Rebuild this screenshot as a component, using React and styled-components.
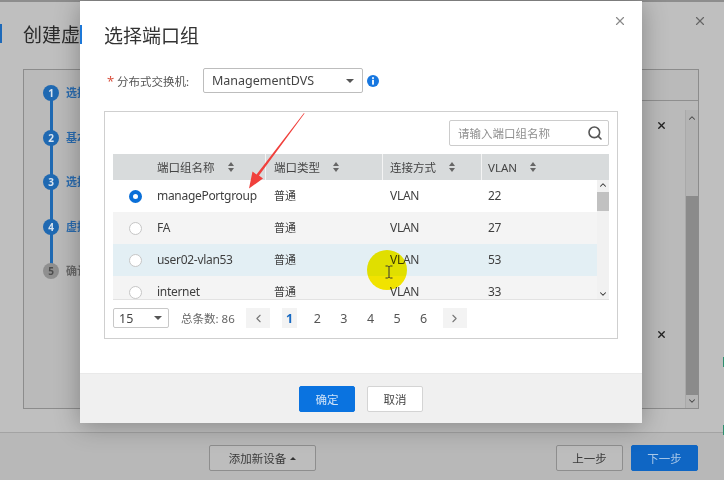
import React from 'react'
import styled, { createGlobalStyle } from 'styled-components'
import { Search, X, ChevronLeft, ChevronRight, ChevronUp, ChevronDown } from 'lucide-react'

const FONT = `"Noto Sans", "Noto Sans CJK SC", sans-serif`

const GlobalStyle = createGlobalStyle`
    html, body { margin: 0; padding: 0; background: #bcbcbc; }
    * { box-sizing: border-box; }
    body { font-family: ${FONT}; color: #333; }
`

const Page = styled.div`
    position: relative;
    width: 724px;
    height: 480px;
    overflow: hidden;
    display: flex;
    flex-direction: column;
    background: #bfbfbf;
    filter: blur(0.3px);
`
const TopStrip = styled.div`
    height: 2px;
    flex: none;
    background: #8d8d8d;
`
const PageHead = styled.div`
    height: 67px;
    flex: none;
    display: flex;
    align-items: center;
`
const HeadMark = styled.div`
    width: 2px;
    height: 19px;
    margin: 0 21px 0 0;
    background: #1d69b9;
    position: relative;
    top: -2px;
`
const PageTitle = styled.div`
    font-size: 19px;
    color: #2b2b2b;
    position: relative;
    top: -2px;
`
const PageClose = styled.div`
    position: absolute;
    top: 14px;
    right: 17px;
    color: #666;
    display: flex;
`
const Panel = styled.div`
    margin: 0 25px 0 23px;
    height: 340px;
    flex: none;
    border: 1px solid #8c8c8c;
    display: flex;
    background: #bababa;
`
const Stepper = styled.div`
    width: 100px;
    padding: 15px 0 0 19px;
    display: flex;
    flex-direction: column;
`
const Step = styled.div`
    height: 44.5px;
    position: relative;
    display: flex;
    gap: 7px;
    font-size: 11px;
    font-weight: 700;
    white-space: nowrap;
    line-height: 16px;
    color: ${p => (p.$done ? '#2a6cb0' : '#6a6a6a')};
    &::before {
        content: '';
        position: absolute;
        left: 6.5px;
        top: 14px;
        width: 3px;
        height: 34px;
        background: ${p => (p.$done ? '#1f69b2' : 'transparent')};
    }
`
const StepDot = styled.div`
    position: relative;
    width: 16px;
    height: 16px;
    border-radius: 50%;
    flex: none;
    background: ${p => (p.$done ? '#1f69b2' : '#8f8f8f')};
    color: ${p => (p.$done ? '#d7e3ef' : '#4d4d4d')};
    font-size: 10px;
    line-height: 16px;
    text-align: center;
`
const PanelBody = styled.div`
    flex: 1;
    display: flex;
    justify-content: flex-end;
`
const ListArea = styled.div`
    width: 56px;
    margin-top: 30px;
    border-top: 1px solid #8f8f8f;
    display: flex;
    justify-content: flex-end;
    position: relative;
`
const ListMark = styled.div`
    position: absolute;
    left: 14px;
    top: ${p => p.$top}px;
    color: #222;
    display: flex;
`
const PanelScroll = styled.div`
    width: 13px;
    margin-top: 9px;
    border-left: 1px solid #a9a9a9;
    background: #b4b4b4;
    display: flex;
    flex-direction: column;
    align-items: center;
    color: #444;
    padding-top: 3px;
`
const PanelThumb = styled.div`
    width: 100%;
    margin-top: 73px;
    height: 199px;
    background: #8b8b8b;
    margin-bottom: 1px;
`
const PageFoot = styled.div`
    flex: 1;
    margin-top: 23px;
    border-top: 1px solid #a3a3a3;
    display: flex;
    align-items: flex-start;
    padding: 12px 26px 0 209px;
    background: #b8b8b8;
`
const GhostButton = styled.div`
    height: 26px;
    width: ${p => p.$w}px;
    margin-left: ${p => p.$ml || 0}px;
    border: 1px solid #8e8e8e;
    border-radius: 2px;
    background: #bdbdbd;
    font-size: 11.5px;
    color: #3a3a3a;
    display: flex;
    align-items: center;
    justify-content: center;
    gap: 4px;
`
const DarkPrimary = styled(GhostButton)`
    border-color: #0f66c4;
    background: #0f66c4;
    color: #a9c8e8;
`
const UpCaret = styled.span`
    width: 0;
    height: 0;
    border-left: 3px solid transparent;
    border-right: 3px solid transparent;
    border-bottom: 3px solid #333;
`
const EdgeTick = styled.div`
    position: absolute;
    right: 0;
    top: ${p => p.$top}px;
    width: 1px;
    height: 10px;
    background: #2f8f6f;
`

/* dialog */
const Dialog = styled.div`
    position: absolute;
    left: 80px;
    top: 1px;
    width: 562px;
    height: 422px;
    background: #fff;
    box-shadow: 0 3px 24px rgba(0, 0, 0, 0.3);
    display: flex;
    flex-direction: column;
`
const DialogSliver = styled.div`
    position: absolute;
    left: 0;
    top: 24px;
    width: 2px;
    height: 19px;
    background: #1d78d8;
`
const DialogClose = styled.div`
    position: absolute;
    top: 13px;
    right: 15px;
    color: #8a8a8a;
    display: flex;
`
const DialogTitle = styled.div`
    font-size: 19px;
    line-height: 28px;
    margin: 21px 0 0 24px;
    color: #333;
`
const FormRow = styled.div`
    display: flex;
    align-items: center;
    height: 25px;
    margin: 18px 0 0 27px;
`
const Required = styled.span`
    color: #d9523f;
    font-size: 13px;
    width: 10px;
`
const FormLabel = styled.span`
    font-size: 11.5px;
    color: #555;
    width: 86px;
`
const SelectBox = styled.div`
    width: ${p => p.$w}px;
    height: ${p => p.$h}px;
    border: 1px solid ${p => (p.$light ? '#c8c8c8' : '#bdbdbd')};
    border-radius: 2px;
    display: flex;
    align-items: center;
    justify-content: space-between;
    padding: 0 ${p => p.$pr}px 0 ${p => p.$pl}px;
    font-size: ${p => p.$fs}px;
    color: #444;
    background: #fff;
`
const Caret = styled.span`
    width: 0;
    height: 0;
    border-left: 4px solid transparent;
    border-right: 4px solid transparent;
    border-top: 4px solid #555;
`
const InfoDot = styled.span`
    width: 12px;
    height: 12px;
    margin-left: 4px;
    display: flex;
`
const TableCard = styled.div`
    margin: 18px 0 0 24px;
    width: 514px;
    height: 228px;
    border: 1px solid #cfcfcf;
    padding: 8px 8px 0 8px;
`
const SearchRow = styled.div`
    display: flex;
    justify-content: flex-end;
    margin-bottom: 8px;
`
const SearchBox = styled.div`
    width: 160px;
    height: 26px;
    border: 1px solid #cccccc;
    border-radius: 2px;
    display: flex;
    align-items: center;
    justify-content: space-between;
    padding: 0 5px 0 8px;
    font-size: 11.5px;
    color: #8f8f8f;
`
const COLS = '44px 108px 117px 99px 1fr'
const HeadRow = styled.div`
    display: grid;
    grid-template-columns: ${COLS};
    height: 26px;
    background: #d8dbdc;
`
const HeadCell = styled.div`
    display: flex;
    align-items: center;
    gap: 13px;
    font-size: 11.5px;
    color: #444;
    padding-left: ${p => p.$pl || 0}px;
    border-left: ${p => (p.$sep ? '1px solid #f4f4f4' : 'none')};
`
const SortIcon = styled.span`
    display: flex;
    flex-direction: column;
    gap: 2px;
    &::before, &::after {
        content: '';
        width: 0;
        height: 0;
        border-left: 3px solid transparent;
        border-right: 3px solid transparent;
    }
    &::before { border-bottom: 4px solid #666; }
    &::after { border-top: 4px solid #666; }
`
const BodyWrap = styled.div`
    display: flex;
    height: 120px;
    border-bottom: 1px solid #e2e2e2;
`
const Rows = styled.div`
    flex: 1;
    overflow: hidden;
`
const Row = styled.div`
    display: grid;
    grid-template-columns: ${COLS};
    align-items: center;
    height: 32px;
    font-size: 12px;
    letter-spacing: -0.3px;
    color: #3f3f3f;
    background: ${p => p.$bg};
`
const Cell = styled.div`
    padding: 0 0 2px ${p => p.$pl || 0}px;
    white-space: nowrap;
`
const TypeCell = styled(Cell)`
    font-size: 11px;
    letter-spacing: 0;
`
const RadioCell = styled.div`
    display: flex;
`
const Radio = styled.span`
    display: block;
    margin-left: 16px;
    width: 13px;
    height: 13px;
    border-radius: 50%;
    background: #fff;
    border: ${p => (p.$on ? '4px solid #0a6fd8' : '1px solid #c6c6c6')};
`
const TableScroll = styled.div`
    width: 12px;
    background: #f1f1f1;
    display: flex;
    flex-direction: column;
    align-items: center;
    color: #333;
`
const ScrollThumb = styled.div`
    width: 100%;
    height: 19px;
    margin-top: 2px;
    background: #c1c1c1;
`
const Spacer = styled.div`
    flex: 1;
`
const Pager = styled.div`
    display: flex;
    align-items: center;
    margin-top: 8px;
    font-size: 12px;
    color: #555;
`
const PagerTotal = styled.span`
    width: 53px;
    margin: 0 12px;
    font-size: 11.5px;
    color: #666;
    white-space: nowrap;
`
const PagerArrow = styled.div`
    width: 24px;
    height: 20px;
    background: #f3f3f3;
    color: #777;
    display: flex;
    align-items: center;
    justify-content: center;
    margin: 0 ${p => p.$mr || 0}px 0 ${p => p.$ml || 0}px;
`
const PageNum = styled.div`
    width: 26.6px;
    text-align: center;
    font-size: 12.5px;
    color: #555;
`
const ActiveNum = styled.div`
    width: 15px;
    height: 20px;
    margin: 0 7px 0 0;
    background: #f3f3f3;
    color: #1769c2;
    font-weight: 700;
    font-size: 12.5px;
    display: flex;
    align-items: center;
    justify-content: center;
`
const DialogFoot = styled.div`
    margin-top: auto;
    height: 50px;
    background: #f0f0f0;
    border-top: 1px solid #e9e9e9;
    display: flex;
    justify-content: center;
    align-items: center;
    gap: 12px;
`
const FootButton = styled.div`
    width: 56px;
    height: 26px;
    border-radius: 2px;
    font-size: 11.5px;
    display: flex;
    align-items: center;
    justify-content: center;
    background: ${p => (p.$primary ? '#0a73e0' : '#fff')};
    color: ${p => (p.$primary ? '#cfe3f8' : '#444')};
    border: 1px solid ${p => (p.$primary ? '#0a73e0' : '#d4d4d4')};
`

/* recording overlays */
const Highlight = styled.div`
    position: absolute;
    left: 367px;
    top: 250px;
    width: 40px;
    height: 40px;
    border-radius: 50%;
    background: #fcee00;
    mix-blend-mode: multiply;
`
const ScreenInk = styled.svg`
    position: absolute;
    left: 0;
    top: 0;
    pointer-events: none;
`

const STEPS = ['选择', '基本', '选择', '虚拟', '确认']
const ROWS = [
    { name: 'managePortgroup', type: '普通', link: 'VLAN', vlan: '22', bg: '#fff', on: true },
    { name: 'FA', type: '普通', link: 'VLAN', vlan: '27', bg: '#f4f4f4' },
    { name: 'user02-vlan53', type: '普通', link: 'VLAN', vlan: '53', bg: '#e3eff4' },
    { name: 'internet', type: '普通', link: 'VLAN', vlan: '33', bg: '#f4f4f4' },
]

export default function App() {
    return (
        <Page>
            <GlobalStyle />
            <TopStrip />
            <PageHead>
                <HeadMark />
                <PageTitle>创建虚</PageTitle>
            </PageHead>
            <PageClose><X size={14} strokeWidth={2} /></PageClose>
            <Panel>
                <Stepper>
                    {STEPS.map((label, i) => (
                        <Step key={i} $done={i < 4}>
                            <StepDot $done={i < 4}>{i + 1}</StepDot>
                            {label}
                        </Step>
                    ))}
                </Stepper>
                <PanelBody>
                    <ListArea>
                        <ListMark $top={19}><X size={11} strokeWidth={3} /></ListMark>
                        <ListMark $top={228}><X size={11} strokeWidth={3} /></ListMark>
                        <PanelScroll>
                            <ChevronUp size={10} strokeWidth={2.5} />
                            <PanelThumb />
                            <ChevronDown size={10} strokeWidth={2.5} />
                        </PanelScroll>
                    </ListArea>
                </PanelBody>
            </Panel>
            <PageFoot>
                <GhostButton $w={107}>添加新设备 <UpCaret /></GhostButton>
                <Spacer />
                <GhostButton $w={67}>上一步</GhostButton>
                <DarkPrimary $w={67} $ml={8}>下一步</DarkPrimary>
            </PageFoot>
            <EdgeTick $top={357} />
            <EdgeTick $top={425} />

            <Dialog>
                <DialogSliver />
                <DialogClose><X size={14} strokeWidth={2} /></DialogClose>
                <DialogTitle>选择端口组</DialogTitle>
                <FormRow>
                    <Required>*</Required>
                    <FormLabel>分布式交换机:</FormLabel>
                    <SelectBox $w={160} $h={25} $pl={8} $pr={8} $fs={12.5}>
                        ManagementDVS
                        <Caret />
                    </SelectBox>
                    <InfoDot>
                        <svg width="12" height="12" viewBox="0 0 12 12">
                            <circle cx="6" cy="6" r="6" fill="#1777e0" />
                            <rect x="5.1" y="2.2" width="1.8" height="1.7" fill="#fff" />
                            <rect x="5.1" y="4.8" width="1.8" height="4.8" fill="#fff" />
                        </svg>
                    </InfoDot>
                </FormRow>
                <TableCard>
                    <SearchRow>
                        <SearchBox>
                            请输入端口组名称
                            <Search size={16} color="#555" strokeWidth={2.4} />
                        </SearchBox>
                    </SearchRow>
                    <HeadRow>
                        <HeadCell />
                        <HeadCell>端口组名称 <SortIcon /></HeadCell>
                        <HeadCell $sep $pl={8}>端口类型 <SortIcon /></HeadCell>
                        <HeadCell $sep $pl={7}>连接方式 <SortIcon /></HeadCell>
                        <HeadCell $sep $pl={6}>VLAN <SortIcon /></HeadCell>
                    </HeadRow>
                    <BodyWrap>
                        <Rows>
                            {ROWS.map(row => (
                                <Row key={row.name} $bg={row.bg}>
                                    <RadioCell><Radio $on={row.on} /></RadioCell>
                                    <Cell>{row.name}</Cell>
                                    <TypeCell $pl={9}>{row.type}</TypeCell>
                                    <Cell $pl={8}>{row.link}</Cell>
                                    <Cell $pl={7}>{row.vlan}</Cell>
                                </Row>
                            ))}
                        </Rows>
                        <TableScroll>
                            <ChevronUp size={10} strokeWidth={2.5} />
                            <ScrollThumb />
                            <Spacer />
                            <ChevronDown size={10} strokeWidth={2.5} />
                        </TableScroll>
                    </BodyWrap>
                    <Pager>
                        <SelectBox $w={56} $h={20} $pl={5} $pr={6} $fs={12.5} $light>
                            15
                            <Caret />
                        </SelectBox>
                        <PagerTotal>总条数: 86</PagerTotal>
                        <PagerArrow $mr={12}><ChevronLeft size={13} /></PagerArrow>
                        <ActiveNum>1</ActiveNum>
                        {[2, 3, 4, 5, 6].map(n => <PageNum key={n}>{n}</PageNum>)}
                        <PagerArrow $ml={6}><ChevronRight size={13} /></PagerArrow>
                    </Pager>
                </TableCard>
                <DialogFoot>
                    <FootButton $primary>确定</FootButton>
                    <FootButton>取消</FootButton>
                </DialogFoot>
            </Dialog>

            <Highlight />
            <ScreenInk width="724" height="480" viewBox="0 0 724 480">
                <polygon points="304,113 304.5,113.4 259,175.5 263,178.5 249,188.5 252.5,171.5 256.5,174.5" fill="#f0403c" />
                <path d="M385.5 266 h2 q1 0 1.5 1 q.5 -1 1.5 -1 h2 M389 267 v10 M385.5 278 h2 q1 0 1.5 -1 q.5 1 1.5 1 h2" stroke="#333" strokeWidth="1" fill="none" />
            </ScreenInk>
        </Page>
    )
}
